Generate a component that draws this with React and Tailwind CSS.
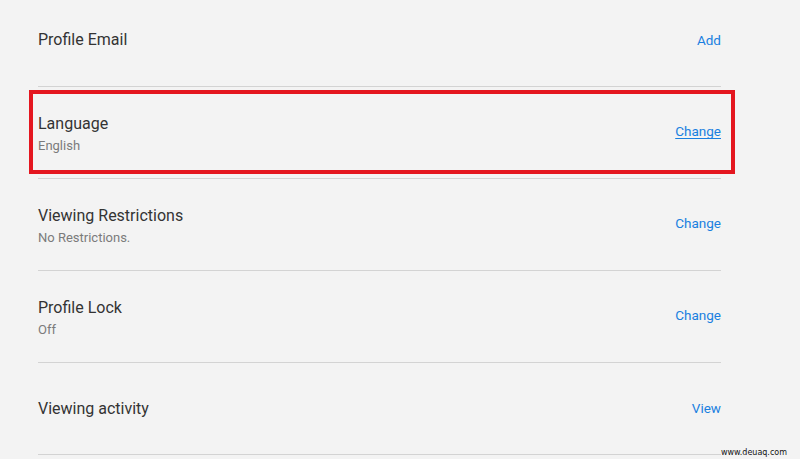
import React from 'react';

const rows = [
    { title: 'Profile Email', action: 'Add' },
    { title: 'Language', sub: 'English', action: 'Change', highlight: true },
    { title: 'Viewing Restrictions', sub: 'No Restrictions.', action: 'Change' },
    { title: 'Profile Lock', sub: 'Off', action: 'Change' },
    { title: 'Viewing activity', action: 'View' },
];

export default function App() {
    return (
        <div className="relative w-[800px] h-[459px] overflow-hidden bg-[#f3f3f3] font-['Roboto',sans-serif]">
            <div className="ml-[38px] w-[683px] flex flex-col">
                {rows.map((row, i) => (
                    <div
                        key={row.title}
                        className={`flex items-center justify-between border-b border-[#d3d3d3] ${i === 0 ? 'h-[87px] pb-[6px]' : row.sub ? 'h-[92px] pt-[2px]' : 'h-[92px]'}`}
                    >
                        <div className="flex flex-col">
                            <span className="text-[16px] leading-[24px] text-[#333333]">{row.title}</span>
                            {row.sub && (
                                <span className="text-[13px] leading-[20px] text-[#7b7b7b]">{row.sub}</span>
                            )}
                        </div>
                        <a className={`text-[13.5px] text-[#1a7fe0] cursor-pointer ${row.sub ? 'mb-[4px]' : ''} ${row.highlight ? 'underline underline-offset-2' : ''}`}>
                            {row.action}
                        </a>
                    </div>
                ))}
            </div>

            {/* annotation box */}
            <div className="absolute left-[29px] top-[90px] w-[706px] h-[84px] border-[4px] border-[#e4161f] pointer-events-none" />

            <span className="absolute right-[13px] bottom-[1px] text-[8px] leading-[10px] text-[#111] font-['DejaVu_Sans',sans-serif]">
                www.deuaq.com
            </span>
        </div>
    );
}
